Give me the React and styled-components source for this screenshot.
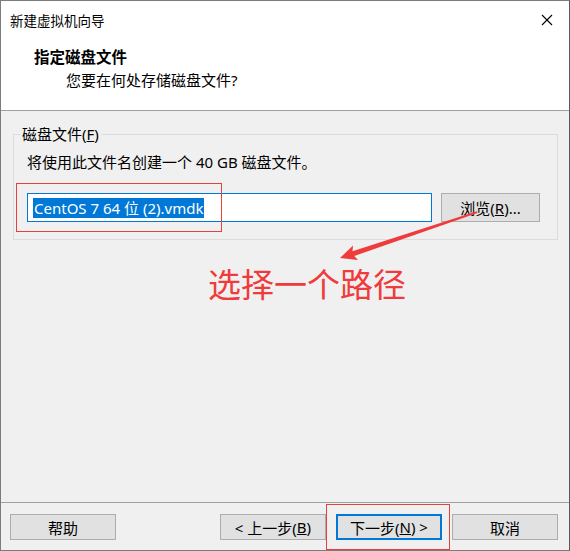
import React from "react";
import styled, { createGlobalStyle } from "styled-components";

const GlobalStyle = createGlobalStyle`
	html, body {
		margin: 0;
		padding: 0;
		background: #ffffff;
	}
	body {
		font-family: "Noto Sans", "Noto Sans CJK SC", sans-serif;
		font-size: 15px;
		color: #000;
	}
`;

const ANNOT = "#ef3b3b";

function CloseIcon() {
	return (
		<svg width="12" height="12" viewBox="0 0 12 12">
			<path d="M1 1 L11 11 M11 1 L1 11" stroke="#000" strokeWidth="1.1" />
		</svg>
	);
}

function Arrow() {
	// drawn in page coordinates, shifted by the body's offset
	return (
		<ArrowSvg viewBox="1 111 568 391" width="568" height="391">
			<polygon
				fill={ANNOT}
				points="340,258 353,245.5 352.5,251.2 476.8,211.3 477.4,213 354.2,256 358,260"
			/>
		</ArrowSvg>
	);
}

function App() {
	return (
		<>
			<GlobalStyle />
			<Window>
				<TitleBar>
					<TitleText>新建虚拟机向导</TitleText>
					<CloseButton>
						<CloseIcon />
					</CloseButton>
				</TitleBar>

				<Header>
					<HeaderTitle>指定磁盘文件</HeaderTitle>
					<HeaderSub>您要在何处存储磁盘文件?</HeaderSub>
				</Header>

				<Body>
					<Group>
						<Legend>
							磁盘文件(<u>F</u>)
						</Legend>
						<Hint>将使用此文件名创建一个 40 GB 磁盘文件。</Hint>
						<FileRow>
							<FileInput>
								<Selected>CentOS 7 64 位 (2).vmdk</Selected>
							</FileInput>
							<Button $width="99px">
								浏览(<u>R</u>)...
							</Button>
						</FileRow>
					</Group>

					<AnnotText>选择一个路径</AnnotText>

					<Arrow />
					<RedBox $left="15px" $top="72px" $width="204px" $height="47px" />
				</Body>

				<Footer>
					<Button>帮助</Button>
					<NavGroup>
						<Button>
							&lt; 上一步(<u>B</u>)
						</Button>
						<Button $primary>
							下一步(<u>N</u>) &gt;
						</Button>
						<Button>取消</Button>
					</NavGroup>
					<RedBox $left="325px" $top="1px" $width="122px" $height="44px" />
				</Footer>
			</Window>
		</>
	);
}

const Window = styled.div`
	width: 570px;
	height: 551px;
	box-sizing: border-box;
	border: 1px solid #7c7c7c;
	border-right-color: #5a5a5a;
	display: flex;
	flex-direction: column;
	background: #f0f0f0;
	overflow: hidden;
`;

const TitleBar = styled.div`
	height: 38px;
	flex: none;
	background: #fff;
	display: flex;
	align-items: center;
	justify-content: space-between;
	padding-left: 9px;
`;

const TitleText = styled.span`
	font-size: 13.5px;
	line-height: 18px;
	margin-top: 1px;
`;

const CloseButton = styled.div`
	width: 46px;
	height: 38px;
	display: flex;
	align-items: center;
	justify-content: center;
	margin-right: -1px;
`;

const Header = styled.div`
	height: 72px;
	flex: none;
	box-sizing: border-box;
	background: #fff;
	border-bottom: 1px solid #a0a0a0;
	padding: 8px 0 0 33px;
`;

const HeaderTitle = styled.div`
	font-weight: 700;
	font-size: 15.5px;
	line-height: 20px;
`;

const HeaderSub = styled.div`
	margin-top: 3px;
	padding-left: 32px;
	line-height: 20px;
`;

const Body = styled.div`
	flex: 1;
	position: relative;
	padding: 14px 11px 0 12px;
`;

const Group = styled.fieldset`
	margin: 0;
	padding: 0 17px 17px 13px;
	border: 1px solid #dcdcdc;
	min-width: 0;
`;

const Legend = styled.legend`
	margin-left: -7px;
	padding: 0 2px;
	line-height: 18px;
`;

const Hint = styled.div`
	margin-top: 9px;
	line-height: 20px;
`;

const FileRow = styled.div`
	display: flex;
	gap: 9px;
	margin-top: 21px;
`;

const FileInput = styled.div`
	flex: 1;
	height: 29px;
	box-sizing: border-box;
	border: 1px solid #0078d7;
	background: #fff;
	display: flex;
	align-items: center;
	padding-left: 5px;
`;

const Selected = styled.span`
	background: #0078d7;
	color: #fff;
	line-height: 20px;
	padding: 0 1px;
`;

const Button = styled.button`
	width: ${(p) => p.$width || "106px"};
	height: ${(p) => (p.$width ? "29px" : "26px")};
	box-sizing: border-box;
	border: ${(p) => (p.$primary ? "2px solid #0078d7" : "1px solid #adadad")};
	background: #e1e1e1;
	font-family: inherit;
	font-size: 15px;
	color: #000;
	padding: 0;
	display: flex;
	align-items: center;
	justify-content: center;
	white-space: pre;
`;

const AnnotText = styled.div`
	margin: 23px 0 0 195px;
	font-family: "Noto Sans CJK SC", sans-serif;
	font-size: 33px;
	line-height: 40px;
	color: ${ANNOT};
`;

const ArrowSvg = styled.svg`
	position: absolute;
	left: 0;
	top: 0;
	pointer-events: none;
`;

const RedBox = styled.div`
	position: absolute;
	left: ${(p) => p.$left};
	top: ${(p) => p.$top};
	width: ${(p) => p.$width};
	height: ${(p) => p.$height};
	border: 1px solid #e8403f;
	pointer-events: none;
`;

const Footer = styled.div`
	height: 48px;
	flex: none;
	box-sizing: border-box;
	position: relative;
	border-top: 1px solid #a0a0a0;
	display: flex;
	justify-content: space-between;
	align-items: flex-start;
	padding: 11px 11px 0 9px;
`;

const NavGroup = styled.div`
	display: flex;
	gap: 10px;
	& > :first-child {
		margin-right: 0;
	}
`;

export default App;
